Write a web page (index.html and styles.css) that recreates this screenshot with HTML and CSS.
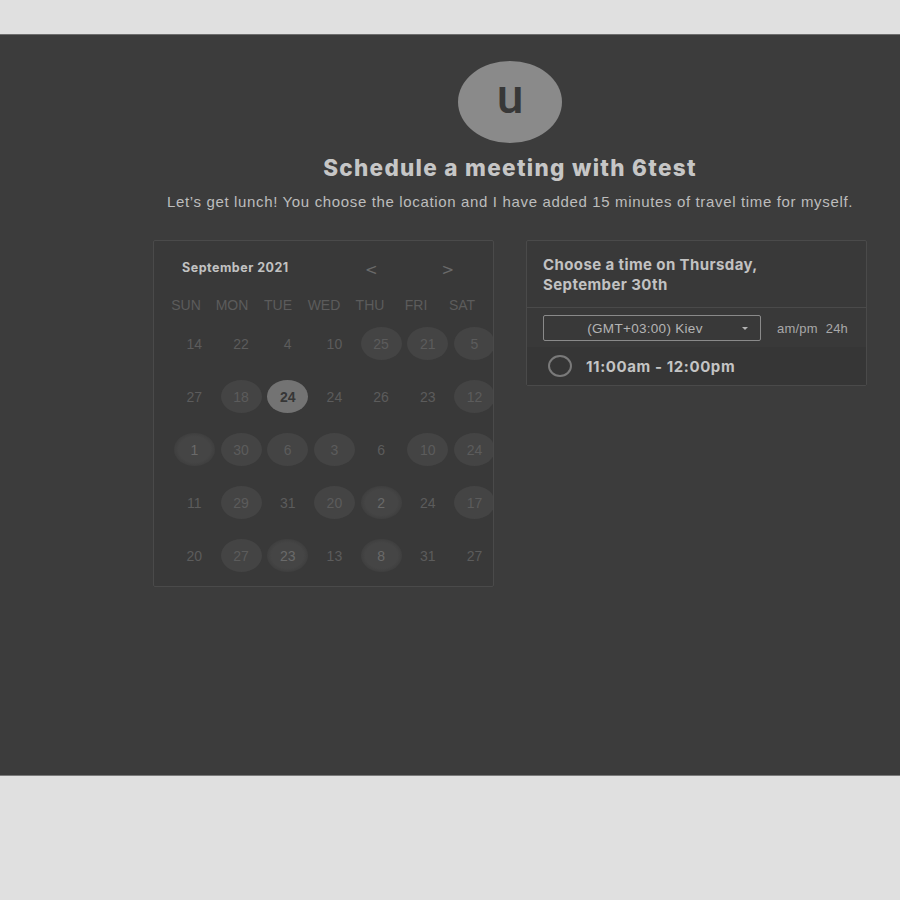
FILE: index.html
```html
<!DOCTYPE html>
<html>
<head>
<meta charset="utf-8">
<link rel="stylesheet" href="styles.css">
</head>
<body>
<div class="panel">
  <div class="wrap">
    <div class="avatar">u</div>
    <h1 class="title">Schedule a meeting with 6test</h1>
    <p class="subtitle">Let’s get lunch! You choose the location and I have added 15 minutes of travel time for myself.</p>
    <div class="cols">
      <div class="card cal">
        <div class="cal-head">
          <span class="month">September 2021</span>
          <span class="arrow prev">&lt;</span>
          <span class="arrow next">&gt;</span>
        </div>
        <div class="grid weekdays">
          <span>SUN</span><span>MON</span><span>TUE</span><span>WED</span><span>THU</span><span>FRI</span><span>SAT</span>
        </div>
        <div class="grid days">
          <span class="d">14</span><span class="d">22</span><span class="d">4</span><span class="d">10</span><span class="d av">25</span><span class="d av">21</span><span class="d av">5</span>
          <span class="d">27</span><span class="d av">18</span><span class="d sel">24</span><span class="d">24</span><span class="d">26</span><span class="d">23</span><span class="d av">12</span>
          <span class="d hat">1</span><span class="d av">30</span><span class="d av">6</span><span class="d av">3</span><span class="d">6</span><span class="d av">10</span><span class="d av">24</span>
          <span class="d">11</span><span class="d av">29</span><span class="d">31</span><span class="d av">20</span><span class="d hat">2</span><span class="d">24</span><span class="d av">17</span>
          <span class="d">20</span><span class="d av">27</span><span class="d hat">23</span><span class="d">13</span><span class="d hat">8</span><span class="d">31</span><span class="d">27</span>
        </div>
      </div>
      <div class="card times">
        <div class="times-head">Choose a time on Thursday, September 30th</div>
        <div class="tz-row">
          <div class="tz-select">(GMT+03:00) Kiev<span class="caret"></span></div>
          <div class="fmt"><span>am/pm</span><span>24h</span></div>
        </div>
        <div class="slot">
          <span class="radio"></span>
          <span class="slot-text">11:00am - 12:00pm</span>
        </div>
      </div>
    </div>
  </div>
</div>
</body>
</html>
```
FILE: styles.css
```css
html, body {
  margin: 0;
  padding: 0;
  background: #e0e0e0;
}
body {
  padding-top: 34px;
  font-family: "Liberation Sans", Arial, sans-serif;
}
.panel {
  height: 740px;
  background: #3c3c3c;
  border-top: 1px solid #6e6e6e;
  border-bottom: 1px solid #7a7a7a;
}
.wrap {
  width: 714px;
  margin-left: 153px;
  display: flex;
  flex-direction: column;
  align-items: center;
}
.avatar {
  margin-top: 26px;
  width: 104px;
  height: 82px;
  border-radius: 50%;
  background: #8a8a8a;
  color: #383838;
  font-family: Roboto, "Liberation Sans", sans-serif;
  font-weight: 500;
  font-size: 48px;
  line-height: 72px;
  text-align: center;
}
.title {
  margin: 11px 0 0;
  font-family: Inter, "Liberation Sans", sans-serif;
  font-weight: 800;
  font-size: 22.5px;
  line-height: 28px;
  color: #c6c6c6;
  letter-spacing: 1.3px;
}
.subtitle {
  margin: 11px 0 0;
  font-size: 15px;
  line-height: 18px;
  color: #bdbdbd;
  letter-spacing: 0.65px;
}
.cols {
  margin-top: 29px;
  width: 100%;
  display: flex;
  gap: 32px;
  align-items: flex-start;
}
.card {
  box-sizing: border-box;
  width: 341px;
  border: 1px solid #4a4a4a;
  border-radius: 2px;
  background: #393939;
}
.cal {
  height: 347px;
  padding: 0 0 0 9px;
  overflow: hidden;
}
.cal-head {
  display: flex;
  align-items: center;
  height: 52px;
  padding-top: 1px;
  box-sizing: border-box;
}
.month {
  margin-left: 19px;
  font-family: Inter, "Liberation Sans", sans-serif;
  font-weight: 700;
  font-size: 12.5px;
  letter-spacing: 0.5px;
  color: #c2c2c2;
  width: 183px;
}
.arrow {
  font-family: "DejaVu Sans", sans-serif;
  font-size: 15px;
  color: #6a6a6a;
  margin-top: 5px;
}
.prev { margin-left: 0; }
.next { margin-left: 64px; }
.grid {
  display: grid;
  justify-items: center;
}
.weekdays {
  grid-template-columns: repeat(7, 46px);
  height: 24px;
  align-items: center;
  font-size: 14px;
  color: #5c5c5c;
  margin-bottom: 0;
}
.days {
  grid-template-columns: repeat(7, 46.7px);
  margin-left: 8px;
  grid-auto-rows: 53px;
  align-items: center;
}
.d {
  width: 41px;
  height: 33px;
  border-radius: 50%;
  display: flex;
  align-items: center;
  justify-content: center;
  font-size: 14px;
  color: #5c5c5c;
}
.av {
  background: #444444;
}
.sel {
  background: #737373;
  color: #363636;
  font-weight: 700;
}
.hat {
  background: radial-gradient(ellipse at center, #454545 0 55%, #3f3f3f 70%, #474747 85%, #3f3f3f 100%);
  color: #6a6a6a;
}
.times-head {
  padding: 14px 40px 12px 16px;
  font-family: Inter, "Liberation Sans", sans-serif;
  font-weight: 700;
  font-size: 15px;
  letter-spacing: 0.4px;
  line-height: 20px;
  color: #c2c2c2;
  border-bottom: 1px solid #4a4a4a;
}
.tz-row {
  display: flex;
  align-items: center;
  padding: 7px 16px 6px;
}
.tz-select {
  position: relative;
  box-sizing: border-box;
  width: 218px;
  height: 26px;
  border: 1px solid #8a8a8a;
  border-radius: 2px;
  font-size: 13.5px;
  letter-spacing: 0.3px;
  color: #b4b4b4;
  display: flex;
  align-items: center;
  justify-content: center;
  padding-right: 14px;
}
.caret {
  position: absolute;
  right: 12px;
  top: 11px;
  border-left: 3px solid transparent;
  border-right: 3px solid transparent;
  border-top: 3px solid #b4b4b4;
}
.fmt {
  margin-left: 16px;
  display: flex;
  gap: 8px;
  font-size: 13px;
  letter-spacing: 0.2px;
  color: #a8a8a8;
}
.slot {
  display: flex;
  align-items: center;
  height: 38px;
  background: #363636;
  padding-left: 21px;
}
.radio {
  box-sizing: border-box;
  width: 24px;
  height: 22px;
  border: 2px solid #7a7a7a;
  border-radius: 50%;
}
.slot-text {
  margin-left: 14px;
  font-family: Inter, "Liberation Sans", sans-serif;
  font-weight: 700;
  font-size: 15px;
  letter-spacing: 0.6px;
  color: #c4c4c4;
}
```
